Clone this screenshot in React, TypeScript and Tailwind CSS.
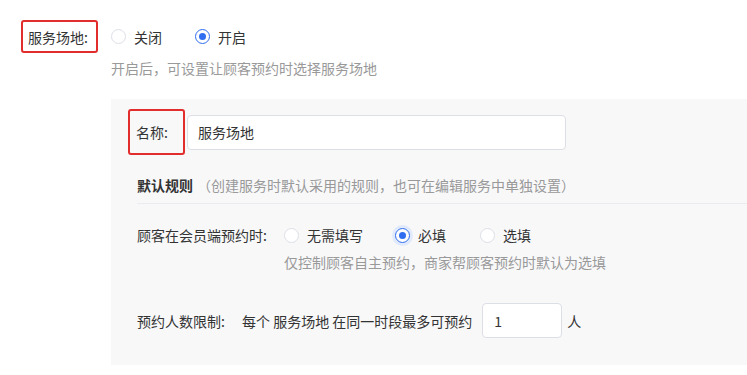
const Radio = ({ checked = false, halo = false }: { checked?: boolean; halo?: boolean }) => (
  <span
    className={`inline-flex items-center justify-center w-[15px] h-[15px] rounded-full border bg-white shrink-0 ${
      checked ? "border-[#2f6ef0]" : "border-[#dcdfe6]"
    } ${halo ? "ring-[3px] ring-[#e1eafc]" : ""}`}
  >
    {checked && <span className="w-[7px] h-[7px] rounded-full bg-[#2f6ef0]" />}
  </span>
);

const Option = ({
  label,
  checked,
  halo,
  className = "",
}: {
  label: string;
  checked?: boolean;
  halo?: boolean;
  className?: string;
}) => (
  <label className={`flex items-center ${className}`}>
    <Radio checked={checked} halo={halo} />
    <span className="ml-[8px] text-[#333]">{label}</span>
  </label>
);

export default function App() {
  return (
    <div
      className="w-[747px] h-[375px] overflow-hidden bg-white text-[14px] leading-[20px] text-[#333]"
      style={{ fontFamily: '"Noto Sans CJK SC", "Noto Sans", sans-serif' }}
    >
      <div className="pl-[21px] pt-[20px]">
        {/* 服务场地 */}
        <div className="flex items-center">
          <div className="flex items-center w-[77px] h-[33px] px-[5px] border-2 border-[#e22d2d] rounded-[3px]">
            服务场地:
          </div>
          <div className="flex items-center ml-[13px]">
            <Option label="关闭" />
            <Option label="开启" checked className="ml-[33px]" />
          </div>
        </div>
        <div className="ml-[90px] mt-[5px] text-[#999]">开启后，可设置让顾客预约时选择服务场地</div>

        {/* panel */}
        <div className="ml-[90px] mt-[21px] bg-[#f8f8f9] pl-[26px] pt-[10px] pb-[27px]">
          <div className="flex items-center -ml-[9px]">
            <div className="flex items-center w-[57px] h-[46px] pl-[6px] border-2 border-[#e22d2d] rounded-[3px]">
              名称:
            </div>
            <div className="ml-[2px] flex items-center w-[379px] h-[35px] px-[10px] bg-white border border-[#dcdfe6] rounded-[4px]">
              服务场地
            </div>
          </div>

          <div className="mt-[20px] pb-[8px] border-b border-[#e9ebef]">
            <span className="font-bold">默认规则</span>
            <span className="ml-[4px] text-[#999]">（创建服务时默认采用的规则，也可在编辑服务中单独设置）</span>
          </div>

          <div className="mt-[21px] flex items-center">
            <div className="w-[147px]">顾客在会员端预约时:</div>
            <Option label="无需填写" />
            <Option label="必填" checked halo className="ml-[32px]" />
            <Option label="选填" className="ml-[34px]" />
          </div>
          <div className="mt-[7px] pl-[147px] text-[#999]">仅控制顾客自主预约，商家帮顾客预约时默认为选填</div>

          <div className="mt-[31px] flex items-center">
            <div className="w-[105px]">预约人数限制:</div>
            <span>每个 服务场地 在同一时段最多可预约</span>
            <div className="ml-[10px] flex items-center w-[80px] h-[35px] px-[11px] bg-white border border-[#dcdfe6] rounded-[4px]">
              1
            </div>
            <span className="ml-[5px]">人</span>
          </div>
        </div>
      </div>
    </div>
  );
}
